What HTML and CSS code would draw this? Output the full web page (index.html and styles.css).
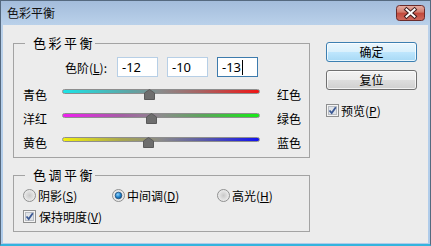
FILE: index.html
```html
<!DOCTYPE html>
<html lang="zh">
<head>
<meta charset="utf-8">
<title>色彩平衡</title>
<link rel="stylesheet" href="styles.css">
</head>
<body>
<div class="window">
  <div class="titlebar">
    <span class="title">色彩平衡</span>
    <span class="close">
      <svg width="29" height="16" viewBox="0 0 29 16">
        <defs>
          <linearGradient id="cg" x1="0" y1="0" x2="0" y2="1">
            <stop offset="0" stop-color="#e6b0a6"/>
            <stop offset="0.45" stop-color="#d27a6c"/>
            <stop offset="0.5" stop-color="#c2483b"/>
            <stop offset="1" stop-color="#cf6b5f"/>
          </linearGradient>
        </defs>
        <rect x="0.5" y="0.5" width="28" height="15" rx="3" fill="url(#cg)" stroke="#6a2b2b"/>
        <path d="M10.5 4.5 L18.5 11.5 M18.5 4.5 L10.5 11.5" stroke="#3e1c1c" stroke-width="4" stroke-linecap="square"/>
        <path d="M10.5 4.5 L18.5 11.5 M18.5 4.5 L10.5 11.5" stroke="#ffffff" stroke-width="2" stroke-linecap="square"/>
      </svg>
    </span>
  </div>
  <div class="client">
    <div class="left">
      <fieldset class="group g1">
        <legend>色彩平衡</legend>
        <div class="levels">
          <span class="levels-label">色阶(<u>L</u>):</span>
          <span class="field">-12</span>
          <span class="field">-10</span>
          <span class="field focus">-13<span class="caret"></span></span>
        </div>
        <div class="srow first">
          <span class="lab">青色</span>
          <span class="slider">
            <span class="track t1"></span>
            <svg class="thumb" style="left:82px" width="11" height="11" viewBox="0 0 11 11"><path d="M5.5 0.5 L10.5 4 L10.5 10.5 L0.5 10.5 L0.5 4 Z" fill="#6e6e6e" stroke="#5a5a5a"/></svg>
          </span>
          <span class="rlab">红色</span>
        </div>
        <div class="srow">
          <span class="lab">洋红</span>
          <span class="slider">
            <span class="track t2"></span>
            <svg class="thumb" style="left:84px" width="11" height="11" viewBox="0 0 11 11"><path d="M5.5 0.5 L10.5 4 L10.5 10.5 L0.5 10.5 L0.5 4 Z" fill="#6e6e6e" stroke="#5a5a5a"/></svg>
          </span>
          <span class="rlab">绿色</span>
        </div>
        <div class="srow">
          <span class="lab">黄色</span>
          <span class="slider">
            <span class="track t3"></span>
            <svg class="thumb" style="left:81px" width="11" height="11" viewBox="0 0 11 11"><path d="M5.5 0.5 L10.5 4 L10.5 10.5 L0.5 10.5 L0.5 4 Z" fill="#6e6e6e" stroke="#5a5a5a"/></svg>
          </span>
          <span class="rlab">蓝色</span>
        </div>
      </fieldset>
      <fieldset class="group g2">
        <legend>色调平衡</legend>
        <div class="radios">
          <span class="opt o1">
            <svg width="13" height="13" viewBox="0 0 13 13"><defs><radialGradient id="r1" cx="0.5" cy="0.5" r="0.6"><stop offset="0" stop-color="#c8c8c8"/><stop offset="1" stop-color="#f6f6f6"/></radialGradient></defs><circle cx="6.5" cy="6.5" r="6" fill="url(#r1)" stroke="#8e8f8f"/></svg>
            <span>阴影(<u>S</u>)</span>
          </span>
          <span class="opt o2">
            <svg width="13" height="13" viewBox="0 0 13 13"><defs><radialGradient id="r2" cx="0.5" cy="0.5" r="0.6"><stop offset="0" stop-color="#c8c8c8"/><stop offset="1" stop-color="#f6f6f6"/></radialGradient><radialGradient id="d2" cx="0.4" cy="0.35" r="0.7"><stop offset="0" stop-color="#8fd3ff"/><stop offset="0.6" stop-color="#1b7fc8"/><stop offset="1" stop-color="#0f4c86"/></radialGradient></defs><circle cx="6.5" cy="6.5" r="6" fill="url(#r2)" stroke="#8e8f8f"/><circle cx="6.5" cy="6.5" r="3.3" fill="url(#d2)" stroke="#27527c" stroke-width="0.8"/></svg>
            <span>中间调(<u>D</u>)</span>
          </span>
          <span class="opt o3">
            <svg width="13" height="13" viewBox="0 0 13 13"><defs><radialGradient id="r3" cx="0.5" cy="0.5" r="0.6"><stop offset="0" stop-color="#c8c8c8"/><stop offset="1" stop-color="#f6f6f6"/></radialGradient></defs><circle cx="6.5" cy="6.5" r="6" fill="url(#r3)" stroke="#8e8f8f"/></svg>
            <span>高光(<u>H</u>)</span>
          </span>
        </div>
        <div class="keep">
          <svg width="13" height="13" viewBox="0 0 13 13"><rect x="0.5" y="0.5" width="12" height="12" fill="#f4f4f4" stroke="#8e8f8f"/><rect x="2.5" y="2.5" width="8" height="8" fill="#dfe3e8" stroke="#b8bcc2"/><path d="M3.5 6.5 L5.7 9 L9.8 3.3" stroke="#3a5894" stroke-width="1.8" fill="none"/></svg>
          <span>保持明度(<u>V</u>)</span>
        </div>
      </fieldset>
    </div>
    <div class="right">
      <span class="btn default">确定</span>
      <span class="btn">复位</span>
      <div class="preview">
        <svg width="13" height="13" viewBox="0 0 13 13"><rect x="0.5" y="0.5" width="12" height="12" fill="#f4f4f4" stroke="#8e8f8f"/><rect x="2.5" y="2.5" width="8" height="8" fill="#dfe3e8" stroke="#b8bcc2"/><path d="M3.5 6.5 L5.7 9 L9.8 3.3" stroke="#3a5894" stroke-width="1.8" fill="none"/></svg>
        <span>预览(<u>P</u>)</span>
      </div>
    </div>
  </div>
</div>
</body>
</html>
```
FILE: styles.css
```css
body {
  margin: 0;
  font-family: "Noto Sans CJK SC", "Noto Sans", sans-serif;
  font-size: 12px;
  color: #000;
}
.window {
  width: 431px;
  height: 246px;
  box-sizing: border-box;
  border: 1px solid #55697f;
  border-bottom: 2px solid #34b4de;
  background: linear-gradient(#a3bcdb, #bad1ea 24px, #aecbea);
  padding: 0 2px 1px;
  display: flex;
  flex-direction: column;
}
.titlebar {
  height: 24px;
  flex: none;
  display: flex;
  justify-content: space-between;
  align-items: flex-start;
}
.title {
  margin: 5px 0 0 4px;
  line-height: 14px;
  color: #111;
}
.close {
  margin: 4px 3px 0 0;
  width: 29px;
  height: 16px;
  display: block;
}
.close svg { display: block; }
.client {
  flex: 1;
  background: #ececec;
  display: flex;
}
.left {
  padding: 10px 0 0 10px;
}
.group {
  margin: 0;
  padding: 0;
  border: 1px solid #a3a3a3;
  width: 297px;
  box-sizing: border-box;
  min-width: 0;
}
.group legend {
  margin-left: 11px;
  padding: 0 0 0 8px;
  letter-spacing: 2.5px;
  line-height: 16px;
  font-size: 13px;
}
.g1 { padding-bottom: 3px; }
.g2 { margin-top: 9px; padding-bottom: 7px; }
.levels {
  display: flex;
  align-items: center;
  margin-top: 6px;
  height: 20px;
}
.levels-label {
  width: 103px;
  box-sizing: border-box;
  padding-right: 10px;
  text-align: right;
}
.field {
  width: 41px;
  height: 20px;
  box-sizing: border-box;
  border: 1px solid #b7cfe6;
  background: #fff;
  margin-right: 9px;
  padding-left: 4px;
  line-height: 18px;
  font-family: "Noto Sans", sans-serif;
  font-size: 13px;
  display: flex;
  align-items: center;
}
.field.focus { border-color: #3d7bad; }
.caret {
  display: inline-block;
  width: 1px;
  height: 15px;
  background: #000;
  margin-left: 1px;
}
.srow {
  display: flex;
  align-items: center;
  height: 24px;
  padding-left: 9px;
}
.srow.first { margin-top: 5px; }
.lab { width: 39px; }
.slider {
  position: relative;
  width: 198px;
  height: 11px;
  display: block;
}
.track {
  display: block;
  height: 5px;
  box-sizing: border-box;
  border: 1px solid #8e8e8e;
  border-radius: 3px;
}
.t1 { background: linear-gradient(to right, #1de3e6, #5fa3a3 35%, #8a8a8a 50%, #a86262 70%, #f01616); }
.t2 { background: linear-gradient(to right, #f01ef0, #a45ea4 30%, #8c8c8c 50%, #5aa65a 72%, #16ea16); }
.t3 { background: linear-gradient(to right, #f2f00e, #a8a650 30%, #8a8a8a 50%, #5a5aa8 72%, #1212f0); }
.thumb {
  position: absolute;
  top: 0;
}
.rlab { margin-left: 17px; }
.radios {
  display: flex;
  align-items: center;
  height: 16px;
  margin-top: 4px;
  padding-left: 9px;
}
.opt {
  display: flex;
  align-items: center;
  gap: 2px;
}
.opt svg, .keep svg, .preview svg { display: block; flex: none; }
.o1 { width: 89px; }
.o2 { width: 105px; }
.keep {
  display: flex;
  align-items: center;
  gap: 3px;
  height: 16px;
  margin-top: 5px;
  padding-left: 9px;
}
.right {
  margin-left: 16px;
  padding-top: 17px;
  width: 91px;
  display: flex;
  flex-direction: column;
}
.btn {
  height: 20px;
  box-sizing: border-box;
  border: 1px solid #707070;
  border-radius: 3px;
  background: linear-gradient(#f2f2f2, #ebebeb 50%, #dddddd 51%, #cfcfcf);
  box-shadow: inset 0 0 0 1px rgba(255,255,255,0.7);
  display: flex;
  align-items: center;
  justify-content: center;
  line-height: 18px;
}
.btn + .btn { margin-top: 8px; }
.btn.default {
  border-color: #3c7fb1;
  background: linear-gradient(#eaf6fd, #d9f0fc 50%, #bee6fd 51%, #a7d9f5);
}
.preview {
  display: flex;
  align-items: center;
  gap: 2px;
  margin-top: 14px;
  height: 13px;
}
```
